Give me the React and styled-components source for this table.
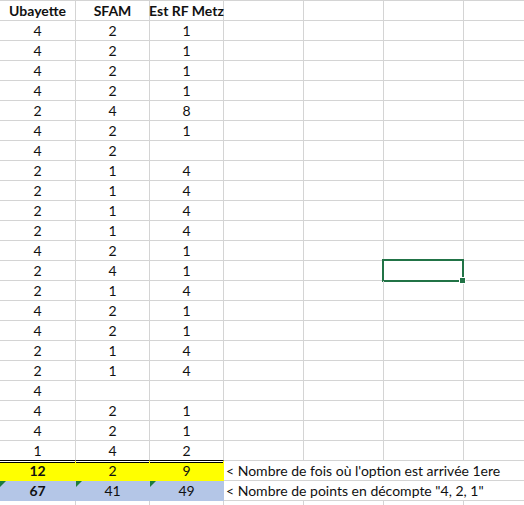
import styled, { createGlobalStyle, css } from 'styled-components';

const GlobalStyle = createGlobalStyle`
  body {
    margin: 0;
    background: #fff;
    overflow: hidden;
  }
`;

const GRID = '#d4d4d4';

const Sheet = styled.div`
  display: grid;
  grid-template-columns: 76px 74px 74px 80px 80px 80px 80px;
  grid-auto-rows: 20px;
  border-top: 1px solid ${GRID};
  width: 544px;
  font-family: Lato, 'Liberation Sans', sans-serif;
  font-size: 14px;
  color: #111;
`;

const Cell = styled.div`
  position: relative;
  box-sizing: border-box;
  display: flex;
  align-items: flex-end;
  justify-content: center;
  line-height: 17px;
  padding-bottom: 1px;
  border-right: 1px solid ${GRID};
  border-bottom: 1px solid ${(p) => (p.$double ? '#000' : GRID)};
  font-weight: ${(p) => (p.$bold ? 700 : 400)};
  white-space: nowrap;

  ${(p) =>
    p.$fill &&
    css`
      background: ${p.$fill};
      border-right-color: ${p.$fill};
      border-bottom-color: ${p.$fill};
    `}

  ${(p) =>
    p.$topDouble &&
    css`
      background: linear-gradient(#fff 0 1px, #000 1px 2px, ${p.$fill} 2px);
    `}

  ${(p) =>
    p.$flag &&
    css`
      &::before {
        content: '';
        position: absolute;
        top: 0;
        left: 0;
        border-top: 6px solid #1e7b3c;
        border-right: 6px solid transparent;
      }
    `}
`;

const Note = styled(Cell)`
  grid-column: span 4;
  justify-content: flex-start;
  padding-left: 2px;
  border-right: none;
  overflow: visible;
`;

const Selected = styled(Cell)`
  &::after {
    content: '';
    position: absolute;
    top: -2px;
    left: -2px;
    right: -1px;
    bottom: -2px;
    border: 2px solid #217346;
  }
`;

const Handle = styled.span`
  position: absolute;
  right: -3px;
  bottom: -4px;
  width: 5px;
  height: 5px;
  background: #217346;
  border: 1px solid #fff;
  z-index: 2;
`;

const rows = [
  [4, 2, 1], [4, 2, 1], [4, 2, 1], [4, 2, 1], [2, 4, 8], [4, 2, 1],
  [4, 2, ''], [2, 1, 4], [2, 1, 4], [2, 1, 4], [2, 1, 4], [4, 2, 1],
  [2, 4, 1], [2, 1, 4], [4, 2, 1], [4, 2, 1], [2, 1, 4], [2, 1, 4],
  [4, '', ''], [4, 2, 1], [4, 2, 1], [1, 4, 2],
];

function Blanks({ count }) {
  return Array.from({ length: count }, (_, i) => <Cell key={i} />);
}

function App() {
  return (
    <>
      <GlobalStyle />
      <Sheet>
        <Cell $bold>Ubayette</Cell>
        <Cell $bold>SFAM</Cell>
        <Cell $bold>Est RF Metz</Cell>
        <Blanks count={4} />

        {rows.map((r, i) => {
          const last = i === rows.length - 1;
          return [
            ...r.map((v, j) => (
              <Cell key={`${i}-${j}`} $double={last}>
                {v}
              </Cell>
            )),
            <Cell key={`${i}-a`} />,
            <Cell key={`${i}-b`} />,
            i === 12 ? (
              <Selected key={`${i}-c`}>
                <Handle />
              </Selected>
            ) : (
              <Cell key={`${i}-c`} />
            ),
            <Cell key={`${i}-d`} />,
          ];
        })}

        <Cell $fill="#ffff00" $topDouble $bold>12</Cell>
        <Cell $fill="#ffff00" $topDouble>2</Cell>
        <Cell $fill="#ffff00" $topDouble>9</Cell>
        <Note>&lt; Nombre de fois où l'option est arrivée 1ere</Note>

        <Cell $fill="#b4c6e7" $flag $bold>67</Cell>
        <Cell $fill="#b4c6e7" $flag>41</Cell>
        <Cell $fill="#b4c6e7" $flag>49</Cell>
        <Note>&lt; Nombre de points en décompte "4, 2, 1"</Note>

        <Blanks count={7} />
      </Sheet>
    </>
  );
}

export default App;
